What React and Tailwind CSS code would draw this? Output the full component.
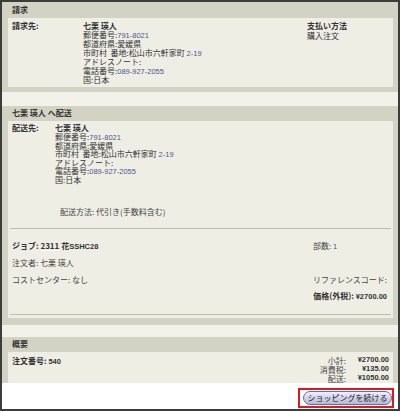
import React from 'react';

const num = "inline-block leading-[8px] font-['Liberation_Sans',sans-serif] text-[7.5px] text-[#52528c]";
const numBold = "inline-block leading-[8px] font-['Liberation_Sans',sans-serif] text-[7.5px] font-bold";

// Khaki panel with a title strip and a lighter inner box
const Panel = ({ title, innerClass, outerClass, children }) => (
  <div className={`bg-[#d3d3c4] pl-[6px] pr-[5px] ${outerClass}`}>
    <div className="h-[15px] pl-[4px] pt-[2px] font-bold leading-[10px] text-[#333]">{title}</div>
    <div className={`bg-[#eeeee5] ${innerClass}`}>{children}</div>
  </div>
);

const Address = ({ lead }) => (
  <div className={`text-[#333] ${lead}`}>
    <div>
      郵便番号:<span className={num}>791-8021</span>
    </div>
    <div>都道府県:愛媛県</div>
    <div>
      市町村&nbsp;&nbsp;番地:松山市六軒家町 <span className={num}>2-19</span>
    </div>
    <div>アドレスノート:</div>
    <div>
      電話番号:<span className={num}>089-927-2055</span>
    </div>
    <div>国:日本</div>
  </div>
);

export default function App() {
  return (
    <div className="w-[400px] h-[411px] border-2 border-[#3c3c3c] bg-white flex flex-col font-['Noto_Sans_CJK_JP',sans-serif] text-[8px] leading-[9px] text-[#333] overflow-hidden">
      {/* 請求 */}
      <Panel title="請求" outerClass="pb-[5px] pt-[1px]" innerClass="h-[69px] pt-[3px] pl-[4px] flex">
        <div className="w-[71px] font-bold leading-[10px]">請求先:</div>
        <div className="w-[224px]">
          <div className="font-bold leading-[10px]">七栗 瑛人</div>
          <Address lead="leading-[8.8px]" />
        </div>
        <div>
          <div className="font-bold leading-[10px]">支払い方法</div>
          <div>購入注文</div>
        </div>
      </Panel>

      <div className="h-[14px] bg-[#f2f2ea]" />

      {/* 配送 */}
      <Panel title="七栗 瑛人 へ配送" outerClass="pb-[7px]" innerClass="h-[197px] pt-[1px] px-[2px]">
        <div className="flex pl-[2px]">
          <div className="w-[43px] font-bold leading-[11px]">配送先:</div>
          <div>
            <div className="font-bold leading-[11px]">七栗 瑛人</div>
            <Address lead="leading-[8px]" />
            <div className="mt-[23px] ml-[5px] text-[#444]">配送方法: 代引き(手数料含む)</div>
          </div>
        </div>

        <div className="mt-[12px] h-px bg-[#bcbcb2]" />

        <div className="grid grid-cols-[1fr_78px] pl-[2px]">
          <div className="mt-[12px] font-bold">
            ジョブ: <span className="underline decoration-white">2311</span> 花<span className={numBold}>SSHC28</span>
          </div>
          <div className="mt-[12px] text-[#444]">
            部数: <span className={num + ' text-[#444]'}>1</span>
          </div>
          <div className="mt-[7px] text-[#444]">注文者: 七栗 瑛人</div>
          <div className="mt-[7px]" />
          <div className="mt-[8px] text-[#444]">コストセンター: なし</div>
          <div className="mt-[8px] text-[#444]">リファレンスコード:</div>
          <div className="col-span-2 mt-[7px] pr-[4px] text-right font-bold whitespace-nowrap">
            価格(外税): <span className={numBold}>¥2700.00</span>
          </div>
        </div>

        <div className="mt-[13px] h-px bg-[#bcbcb2]" />
      </Panel>

      <div className="h-[12px] bg-[#f2f2ea]" />

      {/* 概要 */}
      <Panel title="概要" outerClass="" innerClass="h-[31px] pt-[4px] pl-[4px] pr-[4px] flex justify-between">
        <div className="font-bold">
          注文番号: <span className={numBold}>540</span>
        </div>
        <div className="grid grid-cols-[auto_43px] text-right">
          <div className="text-[#444]">小計:</div>
          <div className={numBold}>¥2700.00</div>
          <div className="text-[#444]">消費税:</div>
          <div className={numBold}>¥135.00</div>
          <div className="text-[#444]">配送:</div>
          <div className={numBold}>¥1050.00</div>
        </div>
      </Panel>

      <div className="flex-1 flex justify-end items-start">
        <div className="mt-[5px] mr-[4px] w-[96px] h-[20px] border-2 border-[#e0181b] flex items-center justify-end">
          <button className="w-[89px] h-[14px] rounded-full border border-[#6b6b9c] bg-linear-to-b from-[#f0f0fb] to-[#b6b6d8] text-[8px] leading-[12px] text-[#222]">
            ショッピングを続ける
          </button>
        </div>
      </div>
    </div>
  );
}
